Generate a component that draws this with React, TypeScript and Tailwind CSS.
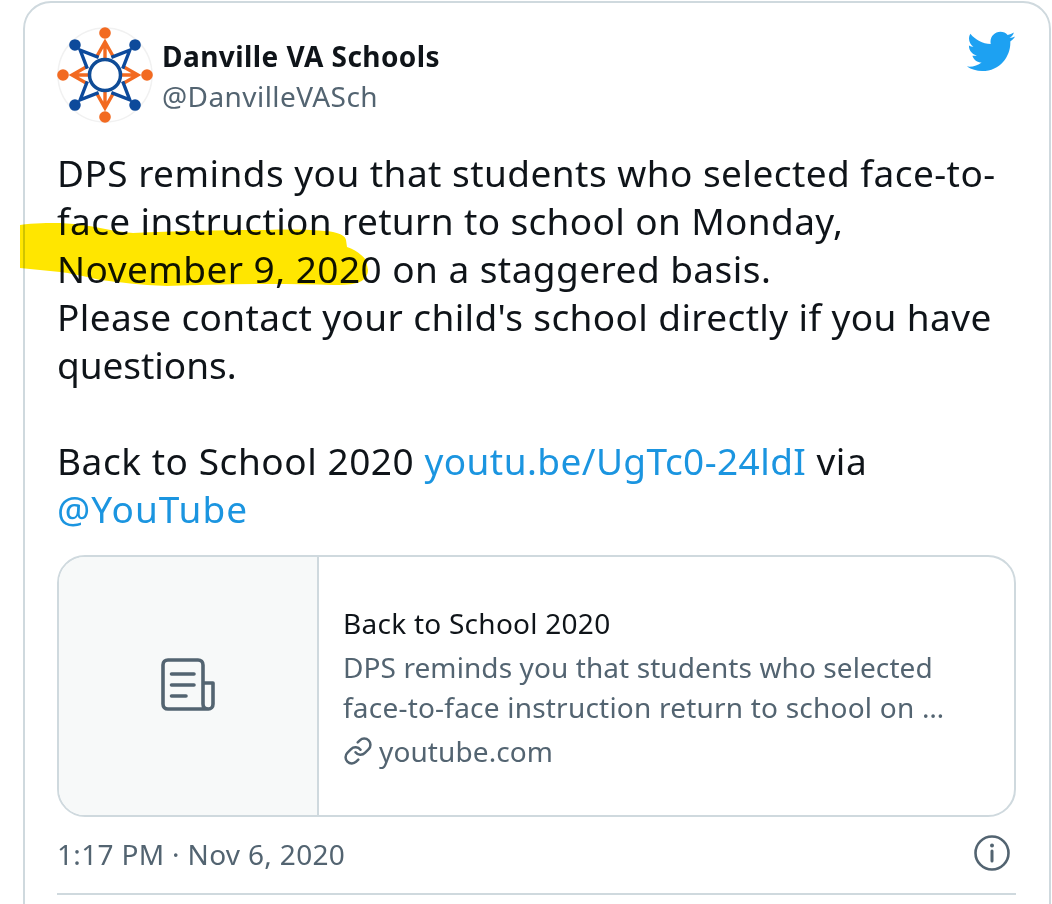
const font = "font-['Noto_Sans',sans-serif]";

function Avatar() {
  const dirs = [0, 45, 90, 135, 180, 225, 270, 315];
  return (
    <svg width="96" height="96" viewBox="0 0 96 96" className="shrink-0">
      <circle cx="48" cy="48" r="47" fill="#fff" stroke="#f1f1f1" strokeWidth="1.5" />
      {dirs.filter((a) => a % 90 === 0).map((a) => (
        <g key={a} transform={`rotate(${a} 48 48)`}>
          <circle cx="48" cy="6" r="5.8" fill="#f26a21" />
          <path d="M39.5 30 L48 15 L56.5 30 M48 15 V32" fill="none" stroke="#f26a21" strokeWidth="3.4" />
        </g>
      ))}
      {dirs.filter((a) => a % 90 !== 0).map((a) => (
        <g key={a} transform={`rotate(${a} 48 48)`}>
          <circle cx="48" cy="5.5" r="5.8" fill="#0d4a9b" />
          <path d="M40 31 L48 13 L56 31" fill="none" stroke="#0d4a9b" strokeWidth="3.4" />
        </g>
      ))}
      <circle cx="48" cy="48" r="15.5" fill="#fff" stroke="#0f4c97" strokeWidth="3.5" />
    </svg>
  );
}

function Highlight() {
  return (
    <svg width="360" height="70" viewBox="0 0 360 70" className="absolute left-[19px] top-[222px] mix-blend-multiply pointer-events-none">
      <path
        d="M1 3 C15 1 30 1 41 1 C70 2 95 10 114 11 C160 9 210 8 248 8 C275 7 300 8 314 10 C322 12 326 14 327 18 L328 25 C335 27 342 32 347 38 L349 48 C349 54 345 59 338 61 C330 63 322 63 314 63 C260 61 200 62 148 64 C120 63 100 60 81 58 C65 54 50 51 41 50 L1 46 Z"
        fill="#ffe600"
      />
    </svg>
  );
}

export default function App() {
  return (
    <div className={`relative h-[904px] w-[1052px] overflow-hidden bg-white ${font} text-[#0f1419]`}>
      <div className="ml-[23px] mr-[1px] mt-[1px] h-[960px] rounded-[28px] border-2 border-[#cfd9de] pl-[32px] pr-[33px] pt-[24px]">
        <div className="flex items-start justify-between">
          <div className="flex items-center gap-[9px]">
            <Avatar />
            <div className="mt-[1px]">
              <div className="text-[28px] font-bold leading-[40px] tracking-[0.44px]">Danville VA Schools</div>
              <div className="text-[28px] leading-[40px] tracking-[0.43px] text-[#536471]">@DanvilleVASch</div>
            </div>
          </div>
          <svg viewBox="0 0 24 24" className="mt-[-1px] h-[51px] w-[51px] fill-[#1da1f2]">
            <path d="M23.643 4.937c-.835.37-1.732.62-2.675.727.962-.576 1.7-1.49 2.048-2.578-.9.534-1.897.922-2.958 1.13-.85-.904-2.06-1.47-3.4-1.47-2.572 0-4.658 2.086-4.658 4.66 0 .364.042.718.12 1.06-3.873-.195-7.304-2.05-9.602-4.868-.4.69-.63 1.49-.63 2.342 0 1.616.823 3.043 2.072 3.878-.764-.025-1.482-.234-2.11-.583v.06c0 2.257 1.605 4.14 3.737 4.568-.392.106-.803.162-1.227.162-.3 0-.593-.028-.877-.082.593 1.85 2.313 3.198 4.352 3.234-1.595 1.25-3.604 1.995-5.786 1.995-.376 0-.747-.022-1.112-.065 2.062 1.323 4.51 2.093 7.14 2.093 8.57 0 13.255-7.098 13.255-13.254 0-.2-.005-.402-.014-.602.91-.658 1.7-1.477 2.323-2.41z" />
          </svg>
        </div>

        <div className="mt-[26px] text-[37px] leading-[48px]">
          <div className="tracking-[0.45px]">DPS reminds you that students who selected face-to-</div>
          <div className="tracking-[0.36px]">face instruction return to school on Monday,</div>
          <div className="tracking-[0.45px]">November 9, 2020 on a staggered basis.</div>
          <div className="tracking-[0.38px]">Please contact your child's school directly if you have</div>
          <div className="tracking-[-0.05px]">questions.</div>
          <div className="h-[48px]" />
          <div className="tracking-[0.55px]">
            Back to School 2020 <span className="tracking-[0.42px] text-[#1b95e0]">youtu.be/UgTc0-24ldI</span> via
          </div>
          <div className="tracking-[1.05px] text-[#1b95e0]">@YouTube</div>
        </div>

        <div className="mt-[22px] flex h-[262px] overflow-hidden rounded-[28px] border-2 border-[#cfd9de]">
          <div className="flex w-[260px] shrink-0 items-center justify-center border-r-2 border-[#cfd9de] bg-[#f7f9f9]">
            <svg width="54" height="53" viewBox="0 0 54 53" fill="none" stroke="#536471" strokeWidth="3.6" strokeLinecap="round" strokeLinejoin="round" className="mb-[3px]">
              <path d="M42 25 H52 V46 C52 49 50 51 47.5 51 H7 C4 51 2 49 2 46 V7 C2 4 4 2 7 2 H37 C40 2 42 4 42 7 V46 C42 49 44 51 47.5 51" />
              <path d="M10.5 16 H33 M10.5 27 H33 M10.5 38 H25" />
            </svg>
          </div>
          <div className="flex flex-col justify-center pl-[24px] pr-[20px] pt-[1px] text-[28px] leading-[40px]">
            <div className="tracking-[0.26px]">Back to School 2020</div>
            <div className="mt-[4px] tracking-[0.09px] text-[#536471]">DPS reminds you that students who selected</div>
            <div className="tracking-[0.21px] text-[#536471]">face-to-face instruction return to school on …</div>
            <div className="mt-[4px] flex items-center gap-[6px] tracking-[0.1px] text-[#536471]">
              <svg viewBox="0 0 24 24" fill="none" stroke="#536471" strokeWidth="2" strokeLinecap="round" strokeLinejoin="round" className="h-[30px] w-[30px]">
                <path d="M10 13a5 5 0 0 0 7.54.54l3-3a5 5 0 0 0-7.07-7.07l-1.72 1.71" />
                <path d="M14 11a5 5 0 0 0-7.54-.54l-3 3a5 5 0 0 0 7.07 7.07l1.71-1.71" />
              </svg>
              <span>youtube.com</span>
            </div>
          </div>
        </div>

        <div className="mt-[13px] flex items-center justify-between text-[#536471]">
          <span className="text-[28px] leading-[48px] tracking-[0.33px]">1:17 PM · Nov 6, 2020</span>
          <svg viewBox="0 0 36 36" fill="none" stroke="#536471" strokeWidth="2.6" strokeLinecap="round" className="mb-[2px] mr-[6px] h-[36px] w-[36px]">
            <circle cx="18" cy="18" r="16.5" />
            <path d="M18 16 V26" strokeWidth="3" />
            <circle cx="18" cy="10.5" r="2" fill="#536471" stroke="none" />
          </svg>
        </div>
        <div className="mt-[15px] border-t-2 border-[#cfd9de]" />
      </div>
      <Highlight />
    </div>
  );
}
